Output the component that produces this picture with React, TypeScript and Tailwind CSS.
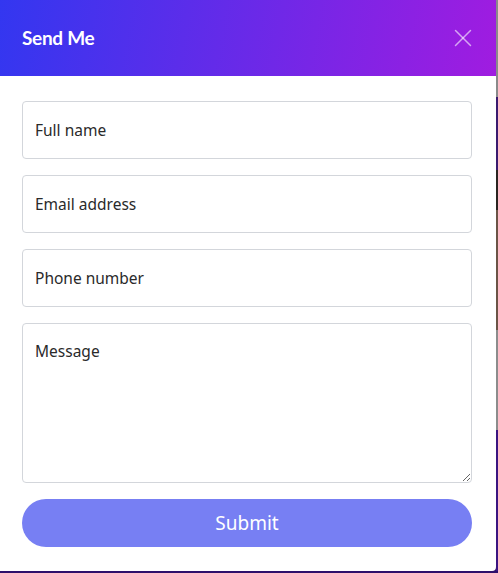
import { X } from "lucide-react";

const fields: string[] = ["Full name", "Email address", "Phone number"];

// Background page strip showing behind the modal
function PageStrip() {
  return (
    <div className="flex flex-col w-[2px] h-[571px]">
      <div className="h-[97px] bg-[#8a8a8a]" />
      <div className="h-[73px] bg-[#3a1a6e]" />
      <div className="h-[40px] bg-[#2a2420]" />
      <div className="h-[120px] bg-[#6b5446]" />
      <div className="h-[100px] bg-[#8c8c8c]" />
      <div className="flex-1 bg-[#3b1480]" />
    </div>
  );
}

export default function App() {
  return (
    <div className="w-[498px] h-[573px] bg-[#2e0f6b] flex items-start font-['Noto_Sans',sans-serif]">
      <div className="w-[496px] h-[571px] bg-white rounded-br-[4px] flex flex-col overflow-hidden">
        <div className="h-[76px] shrink-0 flex items-center justify-between pl-[22px] pr-[18px] bg-[linear-gradient(100deg,#3337f0,#a01ce0)]">
          <h2 className="text-white text-[19px] font-bold tracking-[-0.3px] font-['Lato',sans-serif]">
            Send Me
          </h2>
          <button className="text-white/60">
            <X size={30} strokeWidth={1.2} />
          </button>
        </div>

        <form className="flex flex-col gap-[16px] pl-[22px] pt-[25px] pr-[24px]">
          {fields.map((label: string) => (
            <input
              key={label}
              placeholder={label}
              className="h-[58px] w-full border border-[#d3d6db] rounded-[4px] px-[12px] text-[15.5px] text-[#2a2a2a] placeholder:text-[#2a2a2a] outline-none"
            />
          ))}
          <textarea
            placeholder="Message"
            className="h-[160px] w-full border border-[#d3d6db] rounded-[4px] px-[12px] pt-[16px] text-[15.5px] text-[#2a2a2a] placeholder:text-[#2a2a2a] outline-none resize-y"
          />
          <button
            type="button"
            className="h-[48px] w-full rounded-full bg-[#777ff3] text-white text-[19px]"
          >
            Submit
          </button>
        </form>
      </div>
      <PageStrip />
    </div>
  );
}
